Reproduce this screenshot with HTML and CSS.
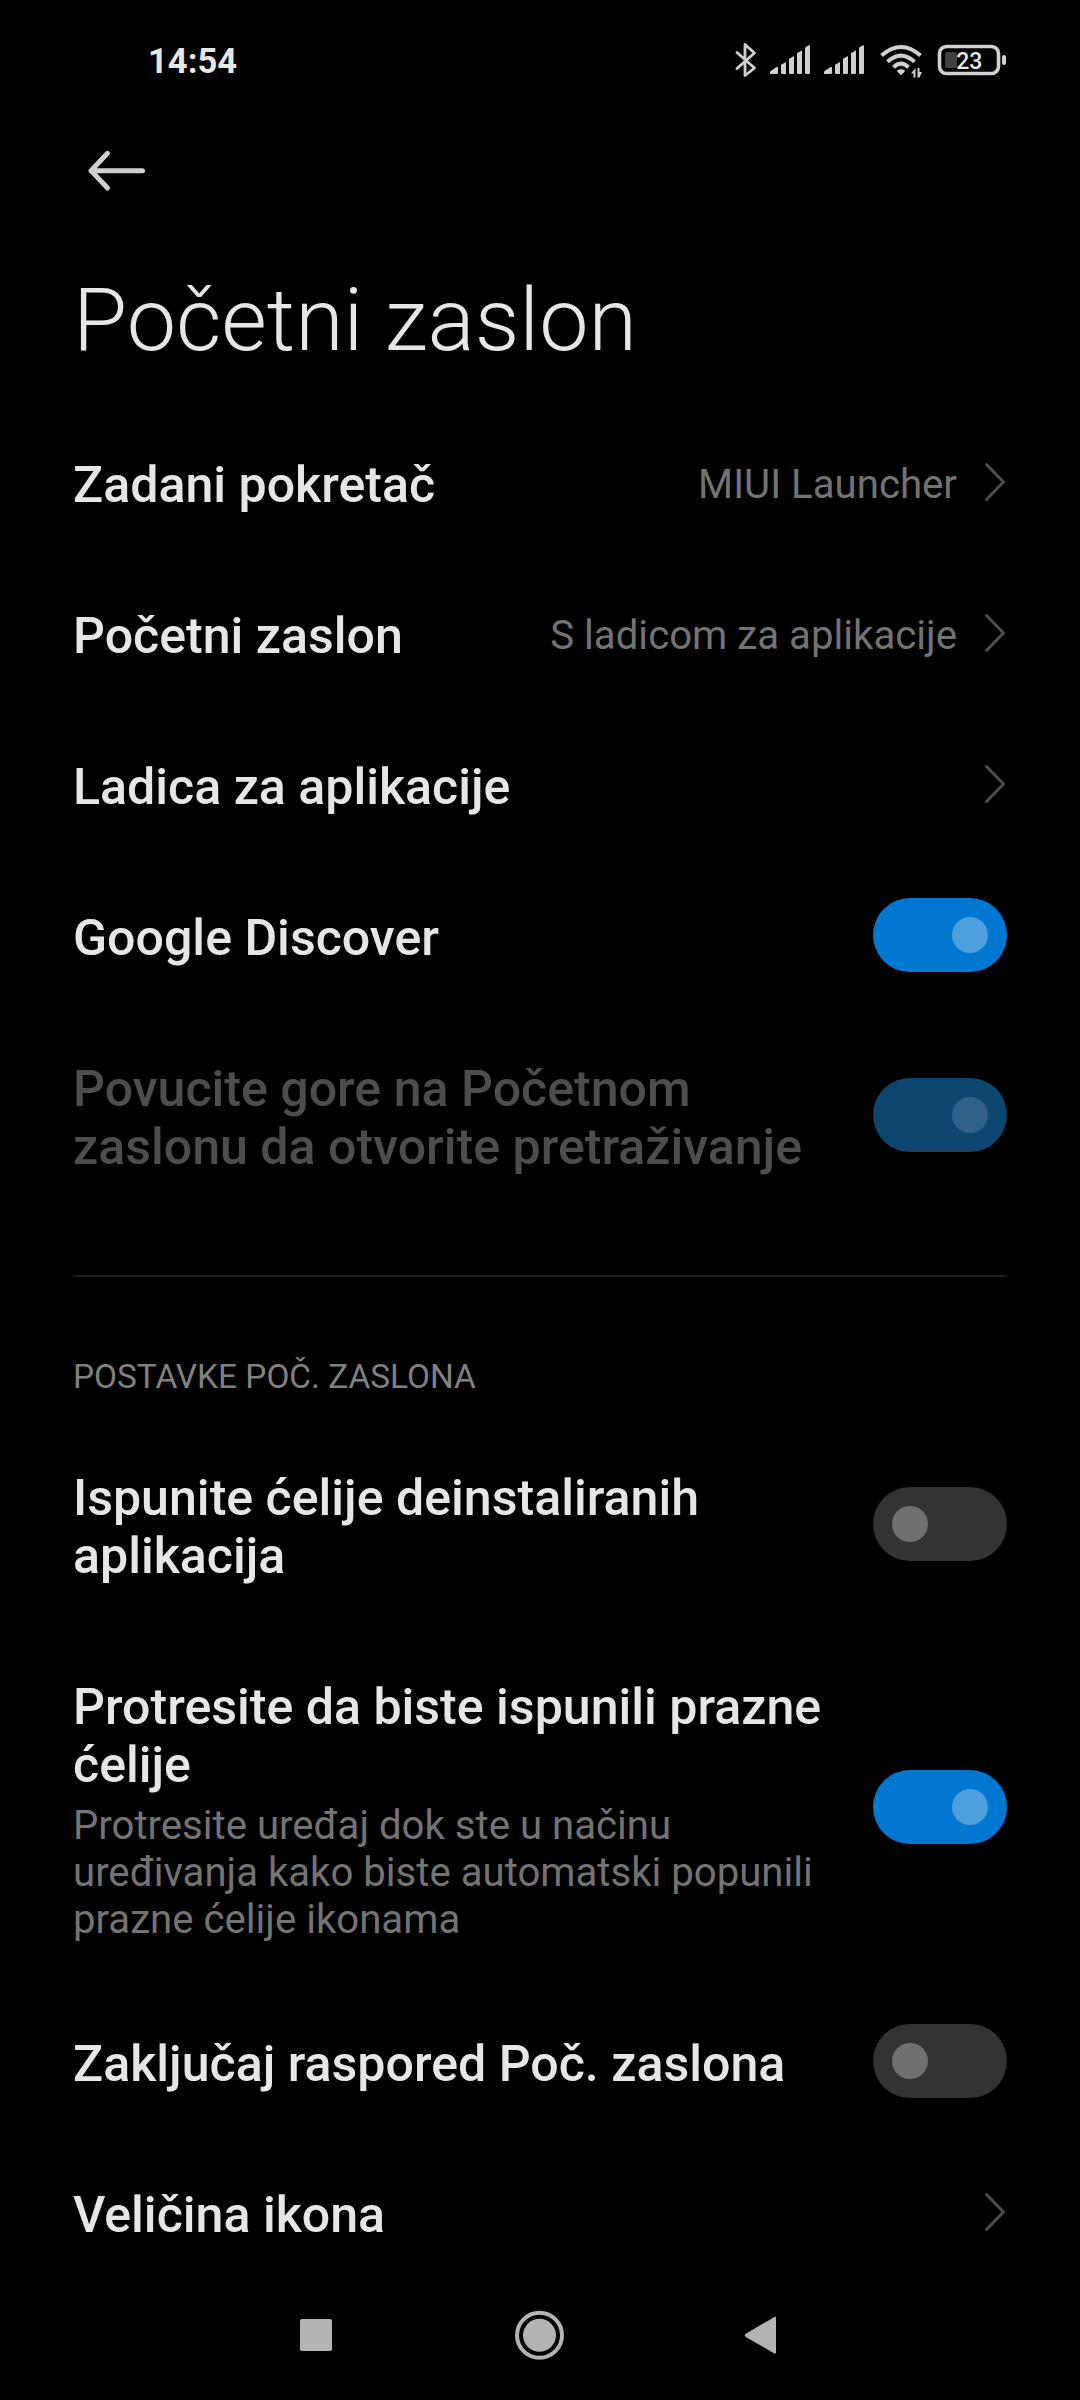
FILE: index.html
```html
<!DOCTYPE html>
<html lang="hr">
<head>
<meta charset="utf-8">
<title>Početni zaslon</title>
<link rel="stylesheet" href="styles.css">
</head>
<body>
<div class="screen">
  <header class="status">
    <span class="clock">14:54</span>
    <svg class="status-icons" width="274" height="40" viewBox="734 40 274 40">
      <path class="bt" d="M737 52.500L754.500 68L745 75.500V44.500L754.500 53L737 68.500"/>
      <g id="signal" class="solid">
        <path d="M770 74v-1.500q0-1 1-1.700l5.500-3.800q1.500-.8 1.500.800v5q0 1.200-1.200 1.200z"/>
        <path d="M781 64.800l5-2.800v12h-3.800q-1.200 0-1.200-1.200z"/>
        <path d="M789 58.800l5-2.800v16.800q0 1.200-1.200 1.200h-2.600q-1.200 0-1.200-1.200z"/>
        <path d="M797 53.300l5-3v22.500q0 1.200-1.200 1.200h-2.600q-1.200 0-1.200-1.200z"/>
        <path d="M805 47.800l3.600-2.500q1.400-.6 1.400.900v26.600q0 1.200-1.200 1.200h-2.600q-1.200 0-1.200-1.200z"/>
      </g>
      <use href="#signal" x="54"/>
      <g class="wifi">
        <path d="M881.500 55.500Q901 38.500 920.500 55.500"/>
        <path d="M887.500 61.800Q901 49.500 914.500 61.800"/>
        <path d="M893.500 67.300Q901 60 908.500 67.300"/>
      </g>
      <path class="solid" d="M901 75.200l-3.600-3.500q-.7-1.200.6-1.900 3-1.300 6 0 1.300.7.600 1.900z"/>
      <path class="solid" d="M915.500 68v9.500h-2v-4h-2.500zM917.500 68h2v4h2.500l-2.500 5.500h-2z"/>
      <rect class="battery" x="939.500" y="46.500" width="59" height="27" rx="7"/>
      <rect class="solid" x="1002" y="55" width="4" height="10" rx="2"/>
      <rect class="charge" x="945" y="52" width="12" height="16" rx="2"/>
      <text class="percent" x="956.300" y="69">23</text>
    </svg>
  </header>

  <div class="toolbar">
    <svg width="60" height="44" viewBox="86 149 60 44"><path class="back" d="M142.500 170.700H91M107.500 153.300L92.200 169.500Q91 170.700 92.200 171.900L107.500 188"/></svg>
  </div>
  <h1 class="title">Početni zaslon</h1>

  <main class="list">
    <div class="row"><div class="label">Zadani pokretač</div><div class="value">MIUI Launcher</div>
      <svg class="chevron" width="22" height="40"><path d="M2.500 2.500L19.500 20L2.500 37.500"/></svg></div>
    <div class="row"><div class="label">Početni zaslon</div><div class="value">S ladicom za aplikacije</div>
      <svg class="chevron" width="22" height="40"><path d="M2.500 2.500L19.500 20L2.500 37.500"/></svg></div>
    <div class="row"><div class="label">Ladica za aplikacije</div>
      <svg class="chevron" width="22" height="40"><path d="M2.500 2.500L19.500 20L2.500 37.500"/></svg></div>
    <div class="row"><div class="label">Google Discover</div><div class="toggle on"><span class="knob"></span></div></div>
    <div class="row disabled"><div class="label">Povucite gore na Početnom<br>zaslonu da otvorite pretraživanje</div><div class="toggle on"><span class="knob"></span></div></div>

    <h2 class="section">POSTAVKE POČ. ZASLONA</h2>

    <div class="row"><div class="label">Ispunite ćelije deinstaliranih<br>aplikacija</div><div class="toggle"><span class="knob"></span></div></div>
    <div class="row"><div class="label with-summary">Protresite da biste ispunili prazne<br>ćelije
      <p class="summary">Protresite uređaj dok ste u načinu<br>uređivanja kako biste automatski popunili<br>prazne ćelije ikonama</p></div><div class="toggle on"><span class="knob"></span></div></div>
    <div class="row"><div class="label">Zaključaj raspored Poč. zaslona</div><div class="toggle"><span class="knob"></span></div></div>
    <div class="row"><div class="label">Veličina ikona</div>
      <svg class="chevron" width="22" height="40"><path d="M2.500 2.500L19.500 20L2.500 37.500"/></svg></div>
  </main>

  <nav class="navbar">
    <svg width="50" height="50"><rect x="9" y="9" width="32" height="32" rx="2"/></svg>
    <svg width="50" height="50"><circle class="ring" cx="24.500" cy="25.300" r="22.500"/><circle cx="24.500" cy="25.300" r="16.500"/></svg>
    <svg width="50" height="50"><path d="M6.800 23.700L35 7.200Q37 6.200 37 8V42.500Q37 44.300 35 43.300L6.800 27Q4.800 25.300 6.800 23.700z"/></svg>
  </nav>
</div>
</body>
</html>
```
FILE: styles.css
```css
* { box-sizing: border-box; }
body {
  margin: 0;
  background: #000;
  color: #e6e6e6;
  font-family: Roboto, "Noto Sans", sans-serif;
}
.screen {
  width: 1080px;
  height: 2400px;
  overflow: hidden;
  display: grid;
  grid-template-rows: 120px 130px 156px 1863px 131px;
}
.status {
  padding: 40px 72px 40px 148px;
  display: flex;
  justify-content: space-between;
}
.clock { font-size: 34.600px; font-weight: 700; line-height: 42px; }
.status-icons { display: block; }
.solid { fill: #d0d0d0; }
.bt { fill: none; stroke: #d0d0d0; stroke-width: 2.800; stroke-linecap: round; stroke-linejoin: round; }
.wifi { fill: none; stroke: #d0d0d0; stroke-width: 4; }
.battery { fill: none; stroke: #d0d0d0; stroke-width: 3.600; }
.charge { fill: #404040; }
.percent { fill: #e6e6e6; font-size: 23px; font-weight: 500; }

.toolbar { padding: 29px 86px 0; }
.back { fill: none; stroke: #cfcfcf; stroke-width: 5; stroke-linecap: round; stroke-linejoin: round; }
.title {
  margin: 0;
  padding: 18px 73px 0;
  font-size: 88px;
  font-weight: 300;
  line-height: 104px;
}

.list { padding: 0 73px; overflow: hidden; }
.row { display: flex; align-items: center; }
.label {
  flex: 1;
  padding: 50px 0 43px;
  font-size: 50.100px;
  font-weight: 500;
  line-height: 58px;
  white-space: nowrap;
}
.with-summary { padding-bottom: 42px; }
.summary {
  margin: 8px 0 0;
  color: #737373;
  font-size: 40.150px;
  font-weight: 400;
  line-height: 47px;
}
.value {
  padding-top: 6px;
  margin-right: 27px;
  color: #737373;
  font-size: 40.200px;
  line-height: 47px;
}
.chevron { margin-top: 1px; margin-right: 1px; }
.chevron path { fill: none; stroke: #4d4d4d; stroke-width: 3; stroke-linecap: round; stroke-linejoin: round; }
.toggle {
  display: flex;
  align-items: center;
  width: 133.500px;
  height: 74px;
  margin-top: 1px;
  margin-right: .5px;
  padding: 0 18.500px;
  border-radius: 37px;
  background: #333;
}
.knob { width: 36px; height: 36px; border-radius: 50%; background: #707070; }
.toggle.on { justify-content: flex-end; background: #0077d0; }
.toggle.on .knob { background: #4da0de; }
.disabled .label { color: #4d4d4d; }
.disabled .toggle.on { background: #0d4770; }
.disabled .toggle.on .knob { background: #306186; }
.section {
  height: 144px;
  margin: 56px 0 0;
  padding-top: 79px;
  border-top: 2px solid #1a1a1a;
  color: #808080;
  font-size: 33.400px;
  font-weight: 400;
  line-height: 42px;
}

.navbar {
  padding: 41px 291px 0;
  display: flex;
  justify-content: space-between;
}
.navbar svg { fill: #b3b3b3; }
.navbar .ring { fill: none; stroke: #b3b3b3; stroke-width: 4; }
```
